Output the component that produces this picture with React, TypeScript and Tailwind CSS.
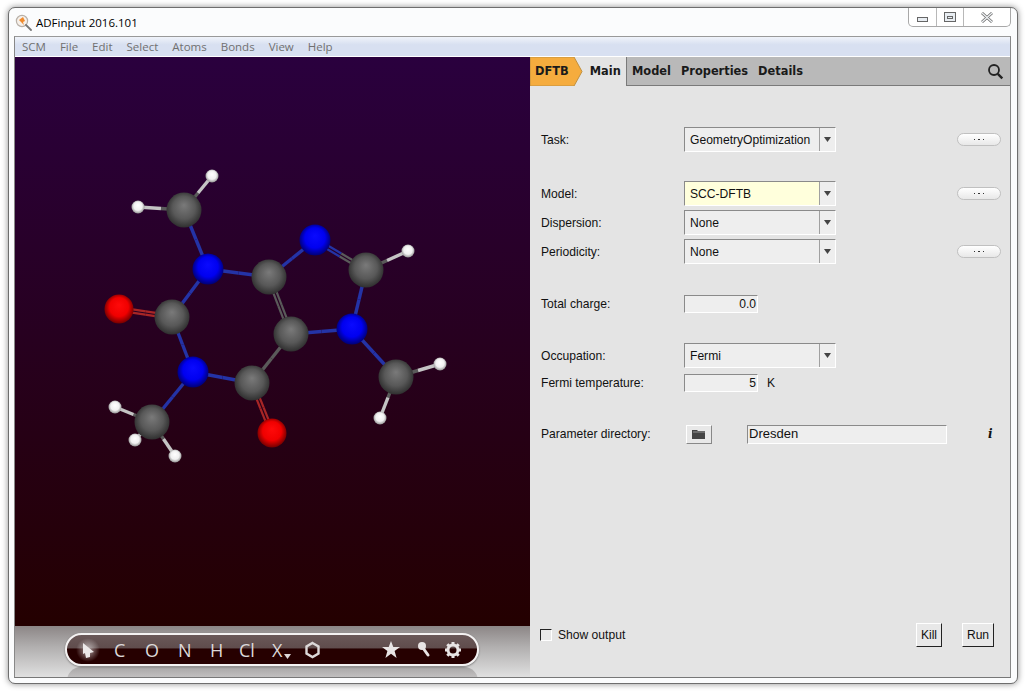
import React from "react";

const atoms: [number, number, number, string][] = [
  [184, 210, 17.5, "c"], [138, 207, 6.5, "h"], [212, 176, 6.5, "h"], [208, 269, 15.5, "n"],
  [269, 277, 17.5, "c"], [315, 240, 15.5, "n"], [366, 270, 17.5, "c"], [408, 251, 6.5, "h"],
  [352, 329, 15.5, "n"], [291, 334, 17.5, "c"], [252, 383, 17.5, "c"], [272, 433, 14.5, "o"],
  [193, 372, 15.5, "n"], [172, 317, 17.5, "c"], [119, 309, 14.5, "o"], [152, 422, 17.5, "c"],
  [115, 407, 6.5, "h"], [135, 440, 6.5, "h"], [175, 456, 6.5, "h"], [396, 377, 17.5, "c"],
  [440, 364, 6.5, "h"], [380, 418, 6.5, "h"],
];
const bonds: [number, number, number?][] = [
  [0, 1], [0, 2], [0, 3], [3, 4], [3, 13], [4, 5], [4, 9, 1], [5, 6, 1], [6, 7], [6, 8], [8, 9], [8, 19],
  [9, 10], [10, 11, 1], [10, 12], [12, 13], [13, 14, 1], [12, 15], [15, 16], [15, 17], [15, 18], [19, 20], [19, 21],
];
const bondColor: Record<string, string> = { c: "#5a5a5a", h: "#c4c4c4", n: "#2433a6", o: "#a82626" };

function Molecule() {
  return (
    <svg viewBox="15 57 515 569" className="block w-full h-full">
      <defs>
        {[
          ["c", "#7a7a7a", "#585858", "#2c2c2c"],
          ["n", "#0a0aff", "#0000f0", "#00006a"],
          ["o", "#ff0a0a", "#f00000", "#6a0000"],
          ["h", "#ffffff", "#f0f0f0", "#8a8a8a"],
        ].map(([id, a, b, c]) => (
          <radialGradient key={id} id={"g" + id} cx="50%" cy="48%" r="54%" fx="50%" fy="36%">
            <stop offset="0%" stopColor={a} />
            <stop offset="60%" stopColor={b} />
            <stop offset="100%" stopColor={c} />
          </radialGradient>
        ))}
      </defs>
      {bonds.map(([i, j, dbl], k) => {
        const [x1, y1, , t1] = atoms[i];
        const [x2, y2, , t2] = atoms[j];
        const mx = (x1 + x2) / 2;
        const my = (y1 + y2) / 2;
        const dx = x2 - x1;
        const dy = y2 - y1;
        const len = Math.hypot(dx, dy);
        const offs = dbl ? [-1.7, 1.7] : [0];
        const nx = -dy / len;
        const ny = dx / len;
        const w = dbl ? 2.2 : 3.4;
        const hetero = [t1, t2].find((t) => t === "n" || t === "o");
        const keepHalf = dbl && hetero === "n";
        const c1 = hetero && !keepHalf ? bondColor[hetero] : bondColor[t1];
        const c2 = hetero && !keepHalf ? bondColor[hetero] : bondColor[t2];
        return (
          <g key={k} strokeWidth={w}>
            {offs.map((o) => (
              <g key={o}>
                <line x1={x1 + nx * o} y1={y1 + ny * o} x2={mx + nx * o} y2={my + ny * o} stroke={c1} />
                <line x1={mx + nx * o} y1={my + ny * o} x2={x2 + nx * o} y2={y2 + ny * o} stroke={c2} />
              </g>
            ))}
          </g>
        );
      })}
      {atoms.map(([x, y, r, t], k) => (
        <circle key={k} cx={x} cy={y} r={r} fill={`url(#g${t})`} />
      ))}
    </svg>
  );
}

function Select({ value, bg = "bg-[#eeeeee]" }: { value: string; bg?: string }) {
  return (
    <div className="flex w-[152px] h-[25px] border-t border-l border-t-[#8a8a8a] border-l-[#8a8a8a] border-r border-b border-r-white border-b-white">
      <div className={`flex-1 flex items-center pl-[5px] pt-[1px] ${bg}`}>{value}</div>
      <div className="w-[16px] border-l border-[#a0a0a0] bg-[#eeeeee] flex items-center justify-center">
        <svg width="7" height="5" viewBox="0 0 7 5"><path d="M0 0h7L3.5 5z" fill="#444" /></svg>
      </div>
    </div>
  );
}

function More() {
  return (
    <div className="w-[44px] h-[13px] rounded-[7px] border border-[#c0c0c0] bg-gradient-to-b from-white to-[#e8e8e8] flex items-center justify-center gap-[3px]">
      <span className="w-[1.5px] h-[1.5px] bg-[#333]" />
      <span className="w-[1.5px] h-[1.5px] bg-[#333]" />
      <span className="w-[1.5px] h-[1.5px] bg-[#333]" />
    </div>
  );
}

function Row({ label, h, mt, children, more }: { label: string; h: string; mt: string; children: React.ReactNode; more?: boolean }) {
  return (
    <div className={`flex items-center pl-[11px] ${h} ${mt}`}>
      <div className="w-[143px] pt-[1px]">{label}</div>
      {children}
      {more && <div className="ml-[121px]"><More /></div>}
    </div>
  );
}

function NumField({ value }: { value: string }) {
  return (
    <div className="w-[74px] h-[18px] bg-[#eeeeee] border-t border-l border-t-[#8a8a8a] border-l-[#8a8a8a] border-r border-b border-r-white border-b-white flex items-center justify-end pr-[1px]">
      {value}
    </div>
  );
}

function ToolLetter({ children, className }: { children: React.ReactNode; className: string }) {
  return <span className={`absolute top-[4px] text-[18px] leading-[22px] text-[#dcd8d8] ${className}`}>{children}</span>;
}

function Toolbar() {
  return (
    <div className="relative ml-[50px] mt-[7px] h-[33px] w-[414px] rounded-[17px] border-2 border-[#f4f2f2] bg-[linear-gradient(#6a5858_0,#5f4c4c_46%,#260000_47%,#260000_100%)] font-['Open_Sans',sans-serif] shadow-[0_1px_2px_rgba(0,0,0,0.4)]">
      <span className="absolute left-[9px] top-[3px] w-[24px] h-[24px] rounded-full bg-[radial-gradient(circle,rgba(255,255,255,0.6)_0,rgba(255,255,255,0)_70%)]" />
      <svg className="absolute left-[15px] top-[8px]" width="13" height="15" viewBox="0 0 13 15">
        <path d="M1 0l11 9-4 1v4l-4 1-1-5-2 1z" fill="#ece8e8" />
      </svg>
      <ToolLetter className="left-[47px]">C</ToolLetter>
      <ToolLetter className="left-[78px]">O</ToolLetter>
      <ToolLetter className="left-[111px]">N</ToolLetter>
      <ToolLetter className="left-[143px]">H</ToolLetter>
      <ToolLetter className="left-[172px]">Cl</ToolLetter>
      <ToolLetter className="left-[205px]">X</ToolLetter>
      <svg className="absolute left-[217px] top-[19px]" width="7" height="5" viewBox="0 0 7 5"><path d="M0 0h7L3.5 5z" fill="#dcd8d8" /></svg>
      <svg className="absolute left-[237px] top-[6px]" width="17" height="18" viewBox="0 0 17 18">
        <path d="M8.5 2l6 3.5v7l-6 3.5-6-3.5v-7z" fill="none" stroke="#dcd8d8" strokeWidth="2.4" />
      </svg>
      <svg className="absolute left-[315px] top-[6px]" width="18" height="17" viewBox="0 0 18 17">
        <path d="M9 0l2.3 6H18l-5.4 4 2 7L9 12.8 3.4 17l2-7L0 6h6.7z" fill="#e8e4e4" />
      </svg>
      <svg className="absolute left-[350px] top-[6px]" width="14" height="17" viewBox="0 0 14 17">
        <circle cx="5" cy="5" r="4" fill="#e8e4e4" />
        <path d="M6 7l5 7" stroke="#e8e4e4" strokeWidth="3" strokeLinecap="round" />
      </svg>
      <svg className="absolute left-[377px] top-[6px]" width="18" height="18" viewBox="0 0 18 18">
        <circle cx="9" cy="9" r="5" fill="none" stroke="#e8e4e4" strokeWidth="3" />
        <g stroke="#e8e4e4" strokeWidth="3">
          <path d="M9 1v3M9 14v3M1 9h3M14 9h3M3.3 3.3l2.1 2.1M12.6 12.6l2.1 2.1M3.3 14.7l2.1-2.1M12.6 5.4l2.1-2.1" />
        </g>
      </svg>
    </div>
  );
}

function AppIcon() {
  return (
    <svg width="17" height="17" viewBox="0 0 17 17">
      <circle cx="7" cy="7" r="5.6" fill="#f6f0ea" stroke="#b8b0a8" strokeWidth="1.2" />
      <path d="M4 6l4-3 2 4-2 1 1 3-3-3z" fill="#f08a2c" />
      <path d="M11 11l5 5" stroke="#777" strokeWidth="1.8" strokeLinecap="round" />
    </svg>
  );
}

export default function App() {
  return (
    <div className="w-[1028px] h-[694px] bg-white pt-[7px] pl-[8px] overflow-hidden">
      <div className="w-[1010px] h-[677px] rounded-[7px] border border-[#6e6e6e] bg-[#fbfcfd] shadow-[0_0_6px_rgba(0,0,0,0.45)] flex flex-col">
        <div className="h-[28px] flex justify-between shrink-0">
          <div className="flex items-center pl-[6px] pt-[1px] gap-[4px]">
            <AppIcon />
            <span className="font-['Open_Sans',sans-serif] text-[11.5px] text-black">ADFinput 2016.101</span>
          </div>
          <div className="flex h-[19px] mr-[6px] border border-t-0 border-[#a8a8a8] rounded-b-[5px] bg-white">
            <div className="w-[28px] border-r border-[#b8b8b8] flex items-center justify-center">
              <span className="mt-[5px] w-[11px] h-[5px] border border-[#666] bg-[#e8edf2]" />
            </div>
            <div className="w-[27px] border-r border-[#b8b8b8] flex items-center justify-center">
              <span className="w-[12px] h-[10px] border border-[#666] bg-[#e8edf2] flex items-center justify-center"><span className="w-[6px] h-[3px] border border-[#666]" /></span>
            </div>
            <div className="w-[46px] flex items-center justify-center">
              <svg width="12" height="11" viewBox="0 0 12 11">
                <path d="M1 1l10 9M11 1L1 10" stroke="#666" strokeWidth="2.8" />
                <path d="M1 1l10 9M11 1L1 10" stroke="#eef1f4" strokeWidth="1.4" />
              </svg>
            </div>
          </div>
        </div>
        <div className="ml-[5px] mr-[6px] h-[642px] border border-b-[#777] border-x-[#888] border-t-[#999] flex flex-col">
          <div className="h-[20px] shrink-0 flex items-center pl-[7px] gap-[14px] bg-[linear-gradient(#f0f3fa,#d8e0f1_40%,#d8e0f1)] border-b border-b-white font-['Open_Sans',sans-serif] text-[11.5px] text-[#707070]">
            <span>SCM</span><span>File</span><span>Edit</span><span>Select</span><span>Atoms</span><span>Bonds</span><span>View</span><span>Help</span>
          </div>
          <div className="flex flex-1 min-h-0">
            <div className="w-[515px] flex flex-col shrink-0">
              <div className="h-[569px] shrink-0 bg-[linear-gradient(#2a003e,#240000)]">
                <Molecule />
              </div>
              <div className="relative flex-1 overflow-hidden bg-[linear-gradient(#8c8686,#b0aeae_40%,#e0e0e0)]">
                <div className="absolute left-[52px] top-[41px] w-[411px] h-[16px] rounded-t-[14px] bg-[linear-gradient(#a8a6a6,#cfcece)]" />
                <Toolbar />
              </div>
            </div>
            <div className="flex-1 flex flex-col bg-[#e4e4e4] font-['Liberation_Sans',sans-serif] text-[12.1px] text-[#111]">
              <div className="relative h-[29px] shrink-0 flex items-stretch bg-[#b9b9b9] border-b border-[#7a7a7a] font-['DejaVu_Sans',sans-serif] font-bold text-[11.4px] text-[#1a1a1a]">
                <div className="relative w-[97px] bg-[#e4e4e4] border-r border-[#7a7a7a] -mb-px flex items-center pt-[1px]">
                  <svg className="absolute left-0 top-0" width="53" height="29" viewBox="0 0 53 29">
                    <path d="M0 0h44l8 14.5-8 14.5H0z" fill="#f5ac3e" stroke="#c09040" strokeWidth="1" />
                  </svg>
                  <span className="relative ml-[5px]">DFTB</span>
                  <span className="relative ml-[21px]">Main</span>
                </div>
                <div className="flex items-center gap-[10px] pl-[5px] pt-[2px]">
                  <span>Model</span><span>Properties</span><span>Details</span>
                </div>
                <svg className="absolute right-[6px] top-[6px]" width="17" height="17" viewBox="0 0 17 17">
                  <circle cx="7" cy="7" r="5" fill="none" stroke="#222" strokeWidth="1.8" />
                  <path d="M10.8 10.8l4.5 4.5" stroke="#222" strokeWidth="2.4" />
                </svg>
              </div>
              <div className="flex-1 flex flex-col">
                <Row label="Task:" h="h-[25px]" mt="mt-[41px]" more><Select value="GeometryOptimization" /></Row>
                <Row label="Model:" h="h-[25px]" mt="mt-[29px]" more><Select value="SCC-DFTB" bg="bg-[#ffffdc]" /></Row>
                <Row label="Dispersion:" h="h-[25px]" mt="mt-[4px]"><Select value="None" /></Row>
                <Row label="Periodicity:" h="h-[25px]" mt="mt-[4px]" more><Select value="None" /></Row>
                <Row label="Total charge:" h="h-[18px]" mt="mt-[31px]"><NumField value="0.0" /></Row>
                <Row label="Occupation:" h="h-[25px]" mt="mt-[30px]"><Select value="Fermi" /></Row>
                <Row label="Fermi temperature:" h="h-[18px]" mt="mt-[6px]">
                  <NumField value="5" />
                  <span className="ml-[9px]">K</span>
                </Row>
                <Row label="Parameter directory:" h="h-[20px]" mt="mt-[32px]">
                  <div className="ml-[2px] w-[26px] h-[19px] bg-[#e8e8e8] border border-t-white border-l-white border-r-[#888] border-b-[#888] flex items-center justify-center">
                    <svg width="14" height="10" viewBox="0 0 14 10"><path d="M0 1h5l1 1h7v8H0z" fill="#444" /><path d="M1 3h12" stroke="#aaa" strokeWidth="0.8" /></svg>
                  </div>
                  <div className="ml-[35px] w-[200px] h-[19px] bg-[#eeeeee] border border-t-[#8a8a8a] border-l-[#8a8a8a] border-r-white border-b-white flex items-center pl-[1px] text-[13px]">Dresden</div>
                  <span className="ml-[41px] font-['DejaVu_Serif',serif] font-bold italic text-[12px]">i</span>
                </Row>
                <div className="mt-[179px] flex items-center h-[24px] pl-[10px] pr-[16px]">
                  <span className="w-[12px] h-[12px] border border-t-[#222] border-l-[#222] border-r-white border-b-white bg-[#e8e8e8]" />
                  <span className="ml-[6px]">Show output</span>
                  <span className="ml-auto w-[26px] h-[24px] flex items-center justify-center bg-[#e8e8e8] border border-t-white border-l-white border-r-[#222] border-b-[#222]">Kill</span>
                  <span className="ml-[20px] w-[32px] h-[24px] flex items-center justify-center bg-[#e8e8e8] border border-t-white border-l-white border-r-[#222] border-b-[#222]">Run</span>
                </div>
              </div>
            </div>
          </div>
        </div>
      </div>
    </div>
  );
}
